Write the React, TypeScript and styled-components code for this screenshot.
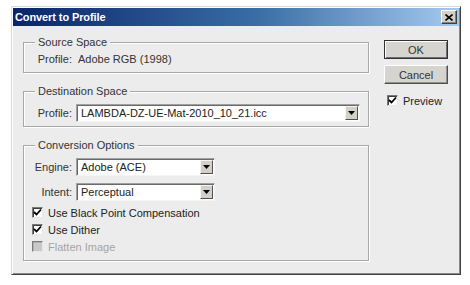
import React from "react";
import styled, { createGlobalStyle } from "styled-components";

const GlobalStyle = createGlobalStyle`
  html, body { margin: 0; padding: 0; background: #ffffff; }
  body { font-family: "Liberation Sans", Arial, sans-serif; font-size: 11px; color: #222; }
  * { box-sizing: border-box; }
`;

const Dialog = styled.div`
  margin: 6px 0 0 11px;
  width: 450px;
  height: 269px;
  background: #ececec;
  border: 1px solid;
  border-color: #d8d8d8 #404040 #404040 #d8d8d8;
  box-shadow: inset 1px 1px 0 #ffffff, inset -1px -1px 0 #8a8a8a;
  padding: 1px;
  display: flex;
  flex-direction: column;
`;

const TitleBar = styled.div`
  height: 18px;
  background: linear-gradient(to right, #0a246a 0%, #3a6ea5 55%, #a6caf0 100%);
  display: flex;
  align-items: center;
  justify-content: space-between;
  padding: 0 2px 0 2px;
`;

const Title = styled.span`
  color: #ffffff;
  font-weight: bold;
  font-size: 11px;
  letter-spacing: -0.1px;
`;

const CloseButton = styled.div`
  width: 16px;
  height: 14px;
  background: #d4d0c8;
  border: 1px solid;
  border-color: #ffffff #404040 #404040 #ffffff;
  box-shadow: inset -1px -1px 0 #808080;
  display: flex;
  align-items: center;
  justify-content: center;
`;

const Body = styled.div`
  flex: 1;
  display: flex;
  padding: 10px 0 0 10px;
`;

const LeftColumn = styled.div`
  width: 346px;
  display: flex;
  flex-direction: column;
  gap: 12px;
`;

const RightColumn = styled.div`
  margin-left: 15px;
  width: 64px;
  padding-top: 4px;
  display: flex;
  flex-direction: column;
`;

const Group = styled.fieldset<{ $pt: number; $pb: number }>`
  margin: 0;
  padding: ${(p) => p.$pt}px 8px ${(p) => p.$pb}px 8px;
  border: 1px solid #a8a8a8;
  box-shadow: 1px 1px 0 #ffffff, inset 1px 1px 0 #ffffff;
  min-width: 0;
  display: flex;
  flex-direction: column;
`;

const Legend = styled.legend`
  margin-left: 3px;
  padding: 0 3px;
  line-height: 13px;
  color: #333;
  background: #ececec;
`;

const Row = styled.div<{ $h?: number }>`
  display: flex;
  align-items: center;
  height: ${(p) => p.$h ?? 18}px;
`;

const Label = styled.span`
  width: 40px;
  flex: none;
  text-align: right;
  margin-right: 4px;
  color: #333;
`;

const Value = styled.span`
  padding-left: 2px;
  color: #333;
`;

const Select = styled.div<{ $w: number }>`
  width: ${(p) => p.$w}px;
  height: 18px;
  background: #ffffff;
  border: 1px solid;
  border-color: #a0a0a0 #f4f4f4 #f4f4f4 #a0a0a0;
  box-shadow: inset 1px 1px 0 #6a6a6a;
  display: flex;
  align-items: center;
  justify-content: space-between;
  padding: 1px 1px 1px 4px;
`;

const SelectText = styled.span`
  color: #222;
  white-space: nowrap;
`;

const DropButton = styled.div`
  width: 13px;
  height: 14px;
  background: #d4d0c8;
  border: 1px solid;
  border-color: #f4f4f4 #505050 #505050 #f4f4f4;
  display: flex;
  align-items: center;
  justify-content: center;
`;

const CheckRow = styled.div<{ $disabled?: boolean; $indent?: number }>`
  display: flex;
  align-items: center;
  height: 17px;
  padding-left: ${(p) => p.$indent ?? 0}px;
  color: ${(p) => (p.$disabled ? "#a4a4a4" : "#222")};
`;

const Box = styled.div<{ $disabled?: boolean }>`
  width: 11px;
  height: 11px;
  flex: none;
  margin-right: 5px;
  background: ${(p) => (p.$disabled ? "#c8c8c8" : "#ffffff")};
  border: 1px solid;
  border-color: #7a7a7a #e8e8e8 #e8e8e8 #7a7a7a;
  box-shadow: inset 1px 1px 0 ${(p) => (p.$disabled ? "#b0b0b0" : "#404040")};
  display: flex;
  align-items: center;
  justify-content: center;
`;

const Button = styled.div<{ $default?: boolean }>`
  width: 64px;
  height: 19px;
  background: #d6d4ce;
  border: 1px solid;
  border-color: ${(p) => (p.$default ? "#303030" : "#ffffff #505050 #505050 #ffffff")};
  box-shadow: ${(p) =>
    p.$default
      ? "inset 1px 1px 0 #ffffff, inset -1px -1px 0 #707070"
      : "inset -1px -1px 0 #909090"};
  display: flex;
  align-items: center;
  justify-content: center;
  color: #333;
`;

const Spacer = styled.div<{ $h: number }>`
  height: ${(p) => p.$h}px;
  flex: none;
`;

const Check = () => (
  <svg width="9" height="9" viewBox="0 0 9 9">
    <path d="M1 4 L3.5 6.5 L8 1.5" fill="none" stroke="#000" strokeWidth="1.8" />
  </svg>
);

const Arrow = () => (
  <svg width="7" height="4" viewBox="0 0 7 4">
    <path d="M0 0 H7 L3.5 4 Z" fill="#000" />
  </svg>
);

const CloseX = () => (
  <svg width="8" height="7" viewBox="0 0 8 7">
    <path d="M0.5 0.5 L7.5 6.5 M7.5 0.5 L0.5 6.5" stroke="#000" strokeWidth="1.6" />
  </svg>
);

const CheckBox: React.FC<{ checked?: boolean; disabled?: boolean; indent?: number; label: string }> = ({
  checked,
  disabled,
  indent,
  label,
}) => (
  <CheckRow $disabled={disabled} $indent={indent}>
    <Box $disabled={disabled}>{checked && <Check />}</Box>
    <span>{label}</span>
  </CheckRow>
);

const Combo: React.FC<{ w: number; text: string }> = ({ w, text }) => (
  <Select $w={w}>
    <SelectText>{text}</SelectText>
    <DropButton>
      <Arrow />
    </DropButton>
  </Select>
);

export default function App() {
  return (
    <>
      <GlobalStyle />
      <Dialog>
        <TitleBar>
          <Title>Convert to Profile</Title>
          <CloseButton>
            <CloseX />
          </CloseButton>
        </TitleBar>
        <Body>
          <LeftColumn>
            <Group $pt={3} $pb={7}>
              <Legend>Source Space</Legend>
              <Row $h={13}>
                <Label>Profile:</Label>
                <Value>Adobe RGB (1998)</Value>
              </Row>
            </Group>
            <Group $pt={6} $pb={4}>
              <Legend>Destination Space</Legend>
              <Row>
                <Label>Profile:</Label>
                <Combo w={288} text="LAMBDA-DZ-UE-Mat-2010_10_21.icc" />
              </Row>
            </Group>
            <Group $pt={6} $pb={5}>
              <Legend>Conversion Options</Legend>
              <Row>
                <Label>Engine:</Label>
                <Combo w={139} text="Adobe (ACE)" />
              </Row>
              <Spacer $h={7} />
              <Row>
                <Label>Intent:</Label>
                <Combo w={139} text="Perceptual" />
              </Row>
              <Spacer $h={3} />
              <CheckBox checked label="Use Black Point Compensation" />
              <CheckBox checked label="Use Dither" />
              <CheckBox disabled label="Flatten Image" />
            </Group>
          </LeftColumn>
          <RightColumn>
            <Button $default>OK</Button>
            <Spacer $h={6} />
            <Button>Cancel</Button>
            <Spacer $h={8} />
            <CheckBox checked indent={3} label="Preview" />
          </RightColumn>
        </Body>
      </Dialog>
    </>
  );
}
